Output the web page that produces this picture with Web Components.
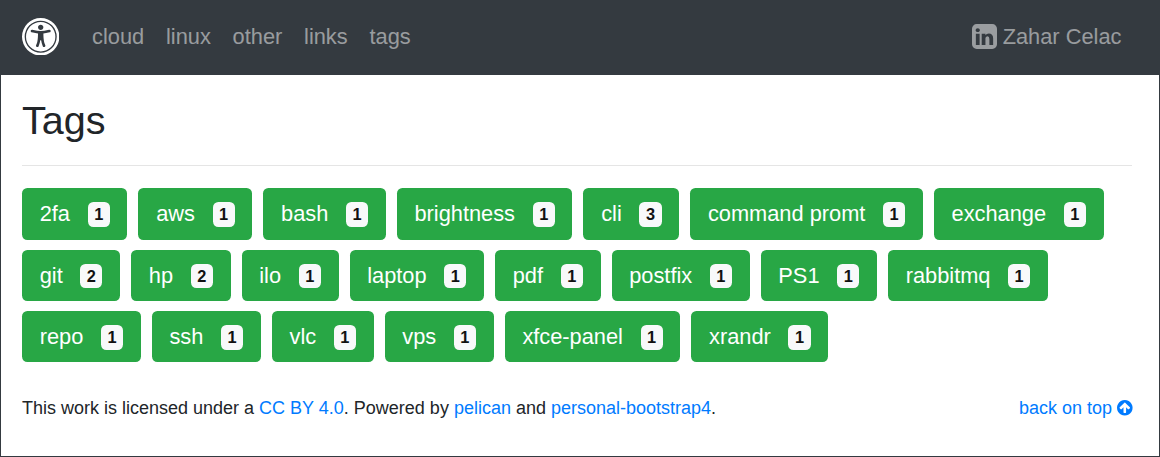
<!DOCTYPE html>
<html lang="en">
<head>
<meta charset="utf-8">
<title>Tags</title>
<style>
html, body { margin: 0; height: 100%; }
body { background: #fff; color: #212529; font: 21.8px/1.5 "Liberation Sans", Arial, sans-serif; overflow: hidden; }
</style>
</head>
<body>
<blog-page>
  <site-nav slot="header">
    <nav-link>cloud</nav-link><nav-link>linux</nav-link><nav-link>other</nav-link><nav-link>links</nav-link><nav-link>tags</nav-link>
    <nav-link slot="end"><fa-icon name="linkedin"></fa-icon>Zahar Celac</nav-link>
  </site-nav>
  <page-title>Tags</page-title>
  <tag-list>
    <tag-button count="1">2fa</tag-button>
    <tag-button count="1">aws</tag-button>
    <tag-button count="1">bash</tag-button>
    <tag-button count="1">brightness</tag-button>
    <tag-button count="3">cli</tag-button>
    <tag-button count="1">command promt</tag-button>
    <tag-button count="1">exchange</tag-button>
    <tag-button count="2">git</tag-button>
    <tag-button count="2">hp</tag-button>
    <tag-button count="1">ilo</tag-button>
    <tag-button count="1">laptop</tag-button>
    <tag-button count="1">pdf</tag-button>
    <tag-button count="1">postfix</tag-button>
    <tag-button count="1">PS1</tag-button>
    <tag-button count="1">rabbitmq</tag-button>
    <tag-button count="1">repo</tag-button>
    <tag-button count="1">ssh</tag-button>
    <tag-button count="1">vlc</tag-button>
    <tag-button count="1">vps</tag-button>
    <tag-button count="1">xfce-panel</tag-button>
    <tag-button count="1">xrandr</tag-button>
  </tag-list>
  <site-footer></site-footer>
</blog-page>
<script>
const define = (name, html, setup) => {
  const template = document.createElement('template');
  template.innerHTML = html;
  customElements.define(name, class extends HTMLElement {
    constructor() {
      super();
      this.attachShadow({ mode: 'open' }).append(template.content.cloneNode(true));
    }
    connectedCallback() { if (setup) setup(this, this.shadowRoot); }
  });
};

const icons = {
  access: ['0 0 1792 1792', 'M1374 609q-6-26-28.5-39.5t-48.5-7.5q-261 62-401 62t-401-62q-26-6-48.5 7.5t-28.5 39.5 7.5 48.5 39.5 28.5q194 46 303 58-2 158-15.5 269t-26.5 155.5-41 115.5l-9 21q-10 25 1 49t36 34q9 4 23 4 44 0 60-41l8-20q54-139 71-259h42q17 120 71 259l8 20q16 41 60 41 14 0 23-4 25-10 36-34t1-49l-9-21q-28-71-41-115.5t-26.5-155.5-15.5-269q109-12 303-58 26-6 39.5-28.5t7.5-48.5zm-350-161q0-53-37.5-90.5t-90.5-37.5-90.5 37.5-37.5 90.5 37.5 90.5 90.5 37.5 90.5-37.5 37.5-90.5zm576 448q0 143-55.5 273.5t-150 225-225 150-273.5 55.5-273.5-55.5-225-150-150-225-55.5-273.5 55.5-273.5 150-225 225-150 273.5-55.5 273.5 55.5 225 150 150 225 55.5 273.5zm-704-768q-156 0-298 61t-245 164-164 245-61 298 61 298 164 245 245 164 298 61 298-61 245-164 164-245 61-298-61-298-164-245-245-164-298-61zm896 768q0 182-71 348t-191 286-286 191-348 71-348-71-286-191-191-286-71-348 71-348 191-286 286-191 348-71 348 71 286 191 191 286 71 348z'],
  linkedin: ['128 128 1536 1536', 'M365 1414h231v-694h-231v694zm246-908q-1-52-36-86t-93-34-94.5 34-36.5 86q0 51 35.5 85.5t92.5 34.5h1q59 0 95-34.5t36-85.5zm585 908h231v-398q0-154-73-233t-193-79q-136 0-209 117h2v-101h-231q3 66 0 694h231v-388q0-38 7-56 15-35 45-59.5t74-24.5q116 0 116 157v371zm468-998v960q0 119-84.5 203.5t-203.5 84.5h-960q-119 0-203.5-84.5t-84.5-203.5v-960q0-119 84.5-203.5t203.5-84.5h960q119 0 203.5 84.5t84.5 203.5z'],
  up: ['128 128 1536 1536', 'M1412 895q0-27-18-45l-362-362-91-91q-18-18-45-18t-45 18l-91 91-362 362q-18 18-18 45t18 45l91 91q18 18 45 18t45-18l189-189v502q0 26 19 45t45 19h128q26 0 45-19t19-45v-502l189 189q19 19 45 19t45-19l91-91q18-18 18-45zm252 1q0 209-103 385.5t-279.5 279.5-385.5 103-385.5-103-279.5-279.5-103-385.5 103-385.5 279.5-279.5 385.5-103 385.5 103 279.5 279.5 103 385.5z']
};

define('fa-icon', `
<style>
:host { display: block; flex: none; width: var(--size, 25px); height: var(--size, 25px); }
svg { display: block; width: 100%; height: 100%; fill: currentColor; }
</style>
<svg aria-hidden="true"><path fill-rule="evenodd"/></svg>`, (el, root) => {
  const [box, d] = icons[el.getAttribute('name')];
  root.querySelector('svg').setAttribute('viewBox', box);
  root.querySelector('path').setAttribute('d', d);
});

define('blog-page', `
<style>
:host { display: flex; flex-direction: column; box-sizing: border-box; height: 100%; border: 1px solid #343a40; }
main { padding: 22px 26px 0 21px; }
</style>
<slot name="header"></slot>
<main><slot></slot></main>`);

define('nav-link', `
<style>
:host { display: block; }
a { display: flex; align-items: center; gap: 5.8px; padding: 2px 10.9px 0; color: rgba(255,255,255,.5); text-decoration: none; }
::slotted(fa-icon) { margin-top: -2px; }
</style>
<a><slot></slot></a>`);

define('site-nav', `
<style>
:host { display: block; flex: none; background: #343a40; }
nav { display: flex; align-items: center; box-sizing: border-box; height: 74px; padding: 0 26.7px 3px 21px; }
.brand { color: #fff; --size: 37.4px; margin-right: 21.8px; }
.links { display: flex; flex: 1; }
</style>
<nav><fa-icon class="brand" name="access"></fa-icon><div class="links"><slot></slot></div><slot name="end"></slot></nav>`);

define('page-title', `
<style>
:host { display: block; border-bottom: 1px solid #e5e5e5; padding-bottom: 22px; margin: 0 1px 22.4px 0; }
h1 { margin: 0; font-size: 39.6px; font-weight: 400; line-height: 46px; }
</style>
<h1><slot></slot></h1>`);

define('tag-list', `
<style>:host { display: flex; flex-wrap: wrap; gap: 10.2px 11px; }</style>
<slot></slot>`);

define('tag-button', `
<style>
:host { display: block; }
a { display: flex; align-items: baseline; box-sizing: border-box; height: 51.2px; padding: 10px 17.7px 8px; border-radius: 5.4px; background: #28a745; color: #fff; white-space: nowrap; }
b { position: relative; top: -1px; margin-left: 17.6px; padding: 4.09px 6.54px; border-radius: 5.4px; background: #f8f9fa; color: #111; font-size: 16.36px; line-height: 1; }
</style>
<a><span><slot></slot></span><b></b></a>`, (el, root) => {
  root.querySelector('b').textContent = el.getAttribute('count');
});

define('site-footer', `
<style>
:host { display: flex; justify-content: space-between; margin: 32.4px 0 0; font-size: 18px; line-height: 27px; }
a { color: #007bff; text-decoration: none; }
.top { display: flex; align-items: center; gap: 5px; --size: 15.6px; margin-right: .3px; }
fa-icon { margin-top: -1px; }
</style>
<span>This work is licensed under a <a>CC BY 4.0</a>. Powered by <a>pelican</a> and <a>personal-bootstrap4</a>.</span>
<a class="top">back on top<fa-icon name="up"></fa-icon></a>`);
</script>
</body>
</html>
